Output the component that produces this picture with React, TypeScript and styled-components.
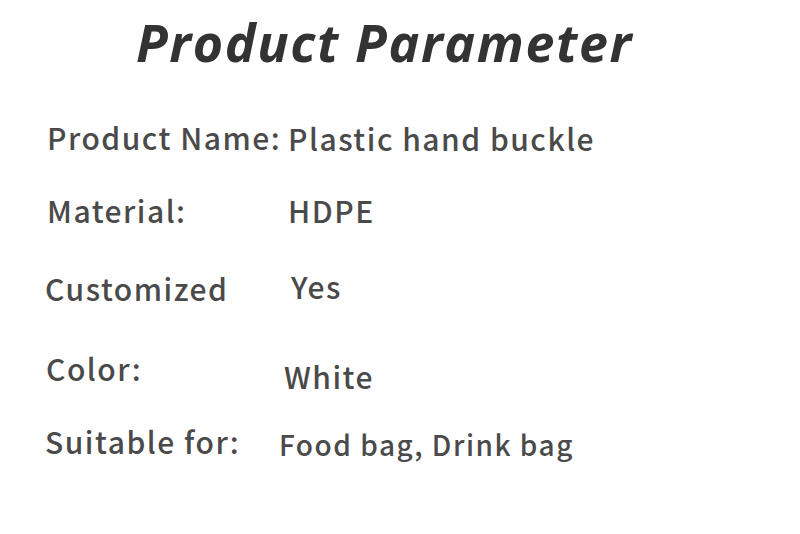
import React from "react";
import styled, { createGlobalStyle } from "styled-components";

const Global = createGlobalStyle`
  html, body { margin: 0; padding: 0; background: #ffffff; }
  body { width: 800px; height: 534px; overflow: hidden; }
`;

const Page = styled.main`
  width: 800px;
  height: 534px;
  box-sizing: border-box;
  padding-top: 16px;
  background: #ffffff;
`;

const Title = styled.h1`
  margin: 0;
  padding-left: 136px;
  font-family: "Open Sans", "Noto Sans", sans-serif;
  font-weight: 700;
  font-style: italic;
  font-size: 52px;
  line-height: 52px;
  color: #333333;
  letter-spacing: 1.6px;
`;

const ParamList = styled.dl<{ $rows: string }>`
  margin: 49px 0 0 0;
  display: grid;
  grid-template-rows: ${(p) => p.$rows};
`;

const ParamRow = styled.div<{ $valueX: number }>`
  display: grid;
  grid-template-columns: ${(p) => p.$valueX}px 1fr;
  align-items: start;
`;

const textBase = `
  margin: 0;
  font-family: "Noto Sans CJK SC", "Noto Sans", sans-serif;
  font-weight: 500;
  line-height: 40px;
  letter-spacing: 1.5px;
  color: #4a4a4a;
  white-space: nowrap;
`;

const Label = styled.dt<{ $x: number; $dy: number }>`
  ${textBase}
  font-size: 30px;
  padding-left: ${(p) => p.$x}px;
  margin-top: ${(p) => p.$dy}px;
`;

const Value = styled.dd<{ $dy: number; $size: number }>`
  ${textBase}
  font-size: ${(p) => p.$size}px;
  margin-top: ${(p) => p.$dy}px;
`;

type Param = {
  label: string;
  value: string;
  labelX: number;
  valueX: number;
  labelDy: number;
  valueDy: number;
  valueSize: number;
  height: string;
};

const params: Param[] = [
  { label: "Product Name:", value: "Plastic hand buckle", labelX: 47, valueX: 288, labelDy: 0, valueDy: 1, valueSize: 30, height: "73px" },
  { label: "Material:", value: "HDPE", labelX: 47, valueX: 288, labelDy: 0, valueDy: 0, valueSize: 30, height: "76px" },
  { label: "Customized", value: "Yes", labelX: 45, valueX: 291, labelDy: 2, valueDy: 0, valueSize: 30, height: "82px" },
  { label: "Color:", value: "White", labelX: 46, valueX: 284, labelDy: 0, valueDy: 8, valueSize: 30, height: "73px" },
  { label: "Suitable for:", value: "Food bag, Drink bag", labelX: 45, valueX: 279, labelDy: 0, valueDy: 3, valueSize: 28, height: "auto" },
];

export default function App() {
  return (
    <>
      <Global />
      <Page>
        <Title>Product Parameter</Title>
        <ParamList $rows={params.map((p) => p.height).join(" ")}>
          {params.map((p) => (
            <ParamRow key={p.label} $valueX={p.valueX}>
              <Label $x={p.labelX} $dy={p.labelDy}>{p.label}</Label>
              <Value $dy={p.valueDy} $size={p.valueSize}>{p.value}</Value>
            </ParamRow>
          ))}
        </ParamList>
      </Page>
    </>
  );
}
